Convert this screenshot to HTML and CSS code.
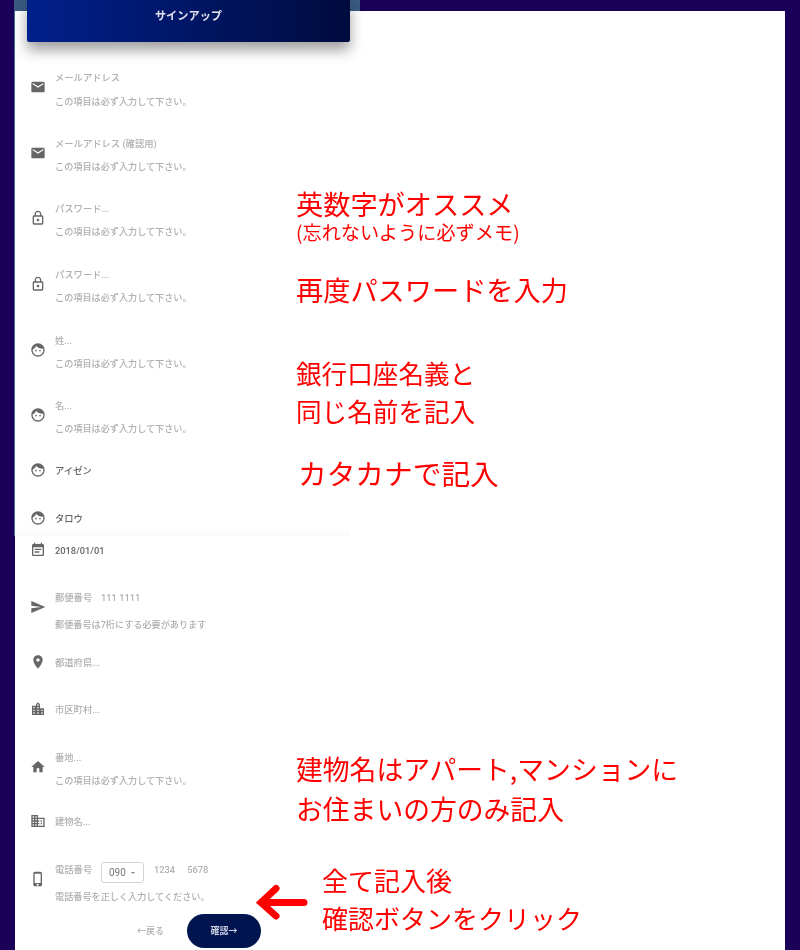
FILE: index.html
```html
<!DOCTYPE html>
<html lang="ja">
<head>
<meta charset="utf-8">
<title>サインアップ</title>
<link rel="stylesheet" href="styles.css">
</head>
<body>
<svg class="sprite" aria-hidden="true">
  <symbol id="i-email" viewBox="0 0 24 24"><path d="M20 4H4c-1.1 0-1.99.9-1.99 2L2 18c0 1.1.9 2 2 2h16c1.1 0 2-.9 2-2V6c0-1.1-.9-2-2-2zm0 4l-8 5-8-5V6l8 5 8-5v2z"/></symbol>
  <symbol id="i-lock" viewBox="0 0 24 24"><path d="M12 17c1.1 0 2-.9 2-2s-.9-2-2-2-2 .9-2 2 .9 2 2 2zm6-9h-1V6c0-2.76-2.24-5-5-5S7 3.24 7 6v2H6c-1.1 0-2 .9-2 2v10c0 1.1.9 2 2 2h12c1.1 0 2-.9 2-2V10c0-1.1-.9-2-2-2zM8.9 6c0-1.71 1.39-3.1 3.1-3.1s3.1 1.39 3.1 3.1v2H8.9V6zM18 20H6V10h12v10z"/></symbol>
  <symbol id="i-face" viewBox="0 0 24 24"><path d="M9 11.75c-.69 0-1.25.56-1.25 1.25s.56 1.25 1.25 1.25 1.25-.56 1.25-1.25-.56-1.25-1.25-1.25zm6 0c-.69 0-1.25.56-1.25 1.25s.56 1.25 1.25 1.25 1.25-.56 1.25-1.25-.56-1.25-1.25-1.25zM12 2C6.48 2 2 6.48 2 12s4.48 10 10 10 10-4.48 10-10S17.52 2 12 2zm0 18c-4.41 0-8-3.59-8-8 0-.29.02-.58.05-.86 2.36-1.05 4.23-2.98 5.21-5.37C11.07 8.33 14.05 10 17.42 10c.78 0 1.53-.09 2.25-.26.21.71.33 1.47.33 2.26 0 4.41-3.59 8-8 8z"/></symbol>
  <symbol id="i-event" viewBox="0 0 24 24"><path d="M17 10H7v2h10v-2zm2-7h-1V1h-2v2H8V1H6v2H5c-1.11 0-1.99.9-1.99 2L3 19c0 1.1.89 2 2 2h14c1.1 0 2-.9 2-2V5c0-1.1-.9-2-2-2zm0 16H5V8h14v11zm-5-5H7v2h7v-2z"/></symbol>
  <symbol id="i-send" viewBox="0 0 24 24"><path d="M2.01 21L23 12 2.01 3 2 10l15 2-15 2z"/></symbol>
  <symbol id="i-place" viewBox="0 0 24 24"><path d="M12 2C8.13 2 5 5.13 5 9c0 5.25 7 13 7 13s7-7.75 7-13c0-3.87-3.13-7-7-7zm0 9.5c-1.38 0-2.5-1.12-2.5-2.5s1.12-2.5 2.5-2.5 2.5 1.12 2.5 2.5-1.12 2.5-2.5 2.5z"/></symbol>
  <symbol id="i-city" viewBox="0 0 24 24"><path d="M15 11V5l-3-3-3 3v2H3v14h18V11h-6zm-8 8H5v-2h2v2zm0-4H5v-2h2v2zm0-4H5V9h2v2zm6 8h-2v-2h2v2zm0-4h-2v-2h2v2zm0-4h-2V9h2v2zm0-4h-2V5h2v2zm6 12h-2v-2h2v2zm0-4h-2v-2h2v2z"/></symbol>
  <symbol id="i-home" viewBox="0 0 24 24"><path d="M10 20v-6h4v6h5v-8h3L12 3 2 12h3v8z"/></symbol>
  <symbol id="i-domain" viewBox="0 0 24 24"><path d="M12 7V3H2v18h20V7H12zM6 19H4v-2h2v2zm0-4H4v-2h2v2zm0-4H4V9h2v2zm0-4H4V5h2v2zm4 12H8v-2h2v2zm0-4H8v-2h2v2zm0-4H8V9h2v2zm0-4H8V5h2v2zm10 12h-8v-2h2v-2h-2v-2h2v-2h-2V9h8v10zm-2-8h-2v2h2v-2zm0 4h-2v2h2v-2z"/></symbol>
  <symbol id="i-phone" viewBox="0 0 24 24"><path d="M15.5 1h-8C6.12 1 5 2.12 5 3.5v17C5 21.88 6.12 23 7.5 23h8c1.38 0 2.5-1.12 2.5-2.5v-17C18 2.12 16.88 1 15.5 1zm-4 21c-.83 0-1.5-.67-1.5-1.5s.67-1.5 1.5-1.5 1.5.67 1.5 1.5-.67 1.5-1.5 1.5zm4.5-4H7V4h9v14z"/></symbol>
</svg>

<main class="card">
  <div class="strip"></div>
  <div class="sheet-fade"></div>
  <header class="signup-head">サインアップ</header>

  <form class="form">
    <div class="row"><svg class="icon"><use href="#i-email"/></svg><div class="fields"><div class="label">メールアドレス</div><div class="error">この項目は必ず入力して下さい。</div></div></div>
    <div class="row"><svg class="icon"><use href="#i-email"/></svg><div class="fields"><div class="label">メールアドレス (確認用)</div><div class="error">この項目は必ず入力して下さい。</div></div></div>
    <div class="row"><svg class="icon"><use href="#i-lock"/></svg><div class="fields"><div class="label">パスワード...</div><div class="error">この項目は必ず入力して下さい。</div></div></div>
    <div class="row"><svg class="icon"><use href="#i-lock"/></svg><div class="fields"><div class="label">パスワード...</div><div class="error">この項目は必ず入力して下さい。</div></div></div>
    <div class="row"><svg class="icon"><use href="#i-face"/></svg><div class="fields"><div class="label">姓...</div><div class="error">この項目は必ず入力して下さい。</div></div></div>
    <div class="row"><svg class="icon"><use href="#i-face"/></svg><div class="fields"><div class="label">名...</div><div class="error">この項目は必ず入力して下さい。</div></div></div>
    <div class="row row-plain"><svg class="icon"><use href="#i-face"/></svg><div class="fields"><div class="value">アイゼン</div></div></div>
    <div class="row row-plain"><svg class="icon"><use href="#i-face"/></svg><div class="fields"><div class="value">タロウ</div></div></div>
    <div class="row row-plain"><svg class="icon"><use href="#i-event"/></svg><div class="fields"><div class="value">2018/01/01</div></div></div>
    <div class="row"><svg class="icon"><use href="#i-send"/></svg><div class="fields"><div class="label label-inline"><span class="label-name">郵便番号</span><span>111 1111</span></div><div class="error error-wide">郵便番号は7桁にする必要があります</div></div></div>
    <div class="row row-plain"><svg class="icon"><use href="#i-place"/></svg><div class="fields"><div class="label">都道府県...</div></div></div>
    <div class="row row-plain"><svg class="icon"><use href="#i-city"/></svg><div class="fields"><div class="label">市区町村...</div></div></div>
    <div class="row"><svg class="icon"><use href="#i-home"/></svg><div class="fields"><div class="label">番地...</div><div class="error">この項目は必ず入力して下さい。</div></div></div>
    <div class="row row-plain"><svg class="icon"><use href="#i-domain"/></svg><div class="fields"><div class="label">建物名...</div></div></div>
    <div class="row"><svg class="icon"><use href="#i-phone"/></svg><div class="fields"><div class="label label-inline"><span class="label-name">電話番号</span><span class="select">090<i class="caret"></i></span><span class="tel-a">1234</span><span class="tel-b">5678</span></div><div class="error error-wide">電話番号を正しく入力してください。</div></div></div>
    <div class="actions">
      <span class="back">←戻る</span>
      <span class="confirm">確認→</span>
    </div>
  </form>

  <p class="note note-1"><span class="big">英数字がオススメ</span><span class="small">(忘れないように必ずメモ)</span></p>
  <p class="note note-2">再度パスワードを入力</p>
  <p class="note note-3">銀行口座名義と<br>同じ名前を記入</p>
  <p class="note note-4">カタカナで記入</p>
  <p class="note note-5">建物名はアパート,マンションに<br>お住まいの方のみ記入</p>
  <p class="note note-6">全て記入後<br>確認ボタンをクリック</p>
  <svg class="arrow" viewBox="0 0 54 40"><path d="M48 20.500H6M20 6.500L5 20.500L20 34"/></svg>
</main>
</body>
</html>
```
FILE: styles.css
```css
* { box-sizing: border-box; }
html, body { margin: 0; height: 100%; }
body {
  background: #1a0058;
  overflow: hidden;
  font-family: Roboto, "Noto Sans CJK JP", sans-serif;
}
.sprite { display: none; }

.card {
  position: relative;
  display: flow-root;
  height: 939px;
  margin: 11px 15px 0;
  background: #fff;
}
.strip {
  position: absolute;
  left: -1px;
  top: -11px;
  width: 346px;
  height: 11px;
  background: #3a5a80;
}
.sheet-fade {
  position: absolute;
  left: -1px;
  top: 0;
  width: 336px;
  height: 525px;
  border-left: 1px solid #3f7391;
  background: linear-gradient(to bottom, transparent 517px, #fafafa 525px);
}
.signup-head {
  position: relative;
  display: flex;
  align-items: center;
  justify-content: center;
  width: 323px;
  height: 42px;
  margin: -11px 0 0 12px;
  padding-bottom: 12px;
  border-radius: 0 0 2px 2px;
  background: linear-gradient(90deg, #00208c, #000b3e);
  box-shadow: 0 8px 14px rgba(0, 0, 0, .38);
  color: #dfe1ee;
  font-size: 11.200px;
  font-weight: 700;
  filter: blur(.4px);
}

.form {
  position: relative;
  display: grid;
  grid-template-rows: 65.600px 65.400px 66px 65.600px 65.400px 65px 48px 32px 47px 65px 47px 48px 64px 48px 51px 36px;
  margin-top: 29px;
  padding-left: 15px;
  filter: blur(.5px);
}
.row { display: flex; align-items: flex-start; }
.icon { flex: none; width: 16px; height: 16px; margin-top: 8px; fill: #666; }
.row-plain .icon { margin-top: -2px; }
.fields { margin-left: 9px; }
.label, .value, .error { height: 14px; line-height: 14px; font-size: 9.300px; font-weight: 500; white-space: nowrap; }
.label { color: #b0b0b0; }
.value { color: #666; }
.error { margin-top: 9.500px; color: #aeaeae; font-size: 9.150px; }
.error-wide { margin-top: 13px; }
.label-inline { display: flex; align-items: center; }
.label-name { width: 46px; }
.select {
  position: relative;
  display: block;
  width: 43px;
  height: 21px;
  margin-top: 6px;
  padding-left: 7px;
  border: 1px solid #d4d4d4;
  border-radius: 3px;
  background: #fff;
  color: #777;
  line-height: 20px;
  font-size: 10px;
  font-weight: 400;
}
.caret {
  position: absolute;
  right: 8px;
  top: 9px;
  border: 2.500px solid transparent;
  border-top-color: #8a8a8a;
  border-bottom-width: 0;
}
.tel-a { margin-left: 10px; }
.tel-b { margin-left: 12px; }

.actions { display: flex; align-items: center; height: 34px; padding-left: 107px; }
.back { width: 50px; color: #b0b0b0; font-size: 9px; font-weight: 500; }
.confirm {
  display: flex;
  align-items: center;
  justify-content: center;
  width: 74px;
  height: 34px;
  border-radius: 17px;
  background: #001450;
  color: #c8cde0;
  font-size: 9px;
  font-weight: 700;
}

.note {
  position: absolute;
  margin: 0;
  color: #ff0000;
  font-family: "Noto Sans CJK JP", sans-serif;
  font-size: 26px;
  white-space: nowrap;
  filter: blur(.3px);
}
.big { display: block; font-size: 27.200px; line-height: 36px; }
.small { display: block; font-size: 19.200px; line-height: 23px; }
.note-1 { left: 281px; top: 174px; }
.note-2 { left: 281px; top: 260px; font-size: 27.200px; line-height: 36px; }
.note-3 { left: 281px; top: 343px; font-size: 25.600px; line-height: 38px; }
.note-4 { left: 283px; top: 444px; font-size: 28.700px; line-height: 36px; }
.note-5 { left: 281px; top: 738px; line-height: 40px; font-size: 26.800px; }
.note-6 { left: 307px; top: 850px; line-height: 38px; font-size: 26px; }
.arrow {
  position: absolute;
  left: 241px;
  top: 871px;
  width: 54px;
  height: 40px;
  fill: none;
  stroke: #ff0000;
  stroke-width: 7;
  stroke-linecap: round;
  stroke-linejoin: miter;
}
```
